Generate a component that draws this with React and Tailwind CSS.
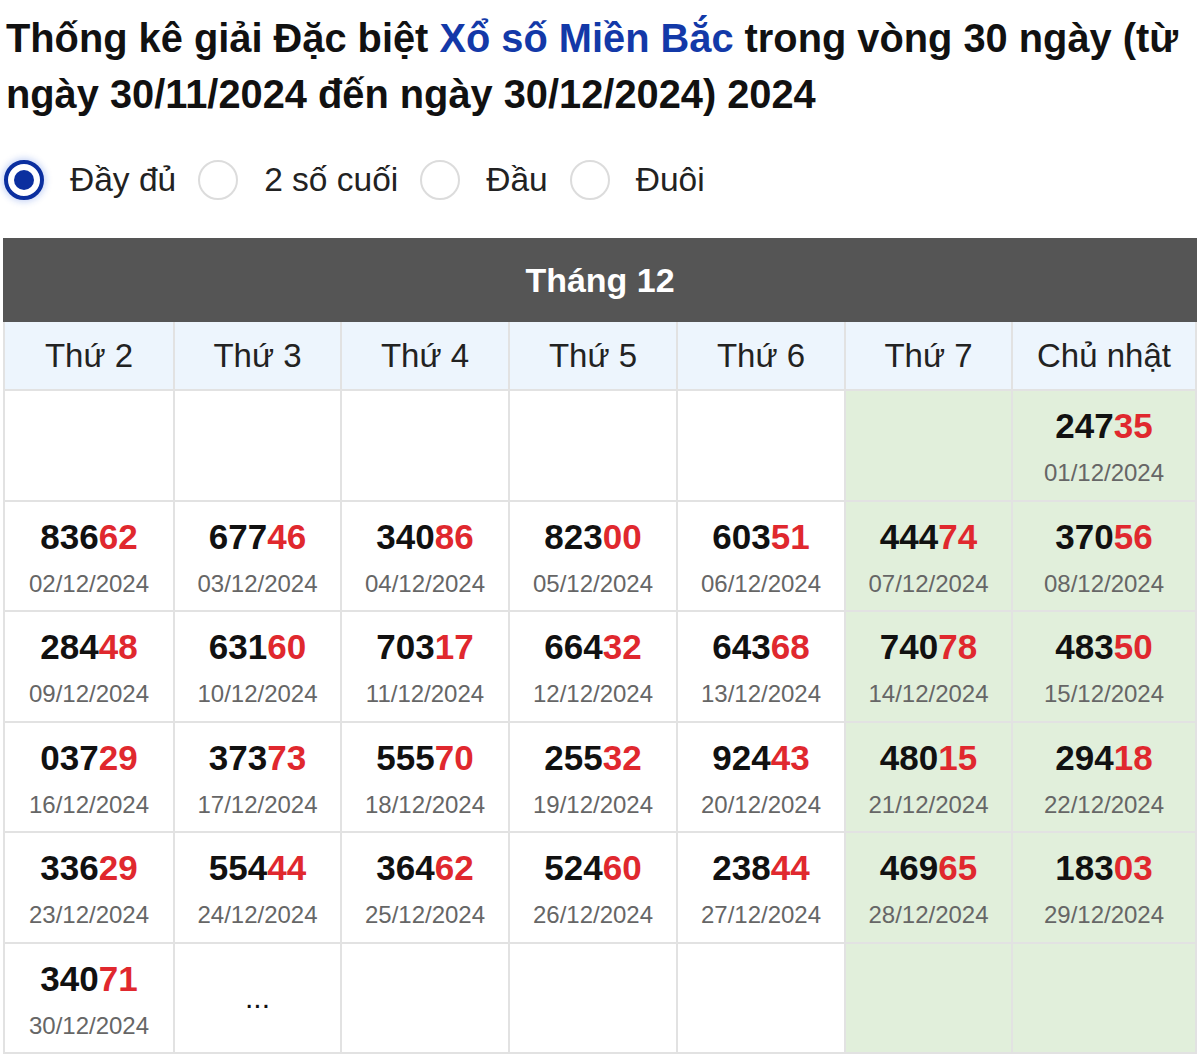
import React from 'react';

const weekdays = ['Thứ 2', 'Thứ 3', 'Thứ 4', 'Thứ 5', 'Thứ 6', 'Thứ 7', 'Chủ nhật'];

// each week: 7 cells, null = empty, '...' = pending
const weeks = [
  [null, null, null, null, null, null, ['24735', '01/12/2024']],
  [['83662', '02/12/2024'], ['67746', '03/12/2024'], ['34086', '04/12/2024'], ['82300', '05/12/2024'], ['60351', '06/12/2024'], ['44474', '07/12/2024'], ['37056', '08/12/2024']],
  [['28448', '09/12/2024'], ['63160', '10/12/2024'], ['70317', '11/12/2024'], ['66432', '12/12/2024'], ['64368', '13/12/2024'], ['74078', '14/12/2024'], ['48350', '15/12/2024']],
  [['03729', '16/12/2024'], ['37373', '17/12/2024'], ['55570', '18/12/2024'], ['25532', '19/12/2024'], ['92443', '20/12/2024'], ['48015', '21/12/2024'], ['29418', '22/12/2024']],
  [['33629', '23/12/2024'], ['55444', '24/12/2024'], ['36462', '25/12/2024'], ['52460', '26/12/2024'], ['23844', '27/12/2024'], ['46965', '28/12/2024'], ['18303', '29/12/2024']],
  [['34071', '30/12/2024'], '...', null, null, null, null, null],
];

const options = ['Đầy đủ', '2 số cuối', 'Đầu', 'Đuôi'];

function Radio({ checked }) {
  if (checked) {
    return (
      <span className="flex h-[40px] w-[40px] shrink-0 items-center justify-center rounded-full border-[4px] border-[#0b2f9f] bg-white shadow-[0_0_6px_2px_rgba(40,90,220,0.25)]">
        <span className="h-[20px] w-[20px] rounded-full bg-[#0b2f9f]" />
      </span>
    );
  }
  return <span className="h-[40px] w-[40px] shrink-0 rounded-full border-2 border-[#dcdcdc] bg-white" />;
}

function Cell({ value, weekend }) {
  const bg = weekend ? 'bg-[#e1efdb]' : 'bg-white';
  if (!value) {
    return <td className={`h-[110.5px] border-2 border-[#e2e2e2] ${bg}`} />;
  }
  if (value === '...') {
    return (
      <td className={`h-[110.5px] border-2 border-[#e2e2e2] text-center align-middle text-[30px] leading-none text-[#111] ${bg}`}>
        ...
      </td>
    );
  }
  const [num, date] = value;
  return (
    <td className={`h-[110.5px] border-2 border-[#e2e2e2] px-0 pt-[14px] text-center align-top ${bg}`}>
      <div className="text-[35px] font-bold leading-[42px] text-[#111]">
        {num.slice(0, 3)}
        <span className="text-[#e0282e]">{num.slice(3)}</span>
      </div>
      <div className="mt-[12px] text-[24px] leading-[28px] text-[#666]">{date}</div>
    </td>
  );
}

export default function App() {
  return (
    <div className="min-h-[1056px] w-[1200px] overflow-hidden bg-white px-[3px] pt-[10px] font-['Liberation_Sans',Arial,sans-serif] text-[#111]">
      <h1 className="pl-[3px] text-[39.8px] font-bold leading-[56px] text-[#111]">
        Thống kê giải Đặc biệt <span className="text-[#1339a8]">Xổ số Miền Bắc</span> trong vòng 30 ngày (từ ngày 30/11/2024 đến ngày 30/12/2024) 2024
      </h1>

      <div className="mt-[38px] flex h-[40px] items-center pl-[1px]">
        {options.map((o, i) => (
          <label key={o} className="mr-[22px] flex items-center gap-[26px]">
            <Radio checked={i === 0} />
            <span className="text-[33.5px] leading-none text-[#222]">{o}</span>
          </label>
        ))}
      </div>

      <table className="mt-[38px] w-[1194px] table-fixed border-collapse">
        <colgroup>
          <col className="w-[170px]" />
          <col className="w-[167px]" />
          <col className="w-[168px]" />
          <col className="w-[168px]" />
          <col className="w-[168px]" />
          <col className="w-[167px]" />
          <col />
        </colgroup>
        <thead>
          <tr>
            <th colSpan={7} className="h-[82px] border-2 border-[#555] bg-[#555] text-center text-[34px] font-bold text-white">
              Tháng 12
            </th>
          </tr>
          <tr>
            {weekdays.map((d) => (
              <th key={d} className="h-[69px] border-2 border-[#e2e2e2] bg-[#edf5fd] text-center text-[33px] font-normal text-[#222]">
                {d}
              </th>
            ))}
          </tr>
        </thead>
        <tbody>
          {weeks.map((w, r) => (
            <tr key={r}>
              {w.map((c, i) => (
                <Cell key={i} value={c} weekend={i >= 5} />
              ))}
            </tr>
          ))}
        </tbody>
      </table>
    </div>
  );
}
